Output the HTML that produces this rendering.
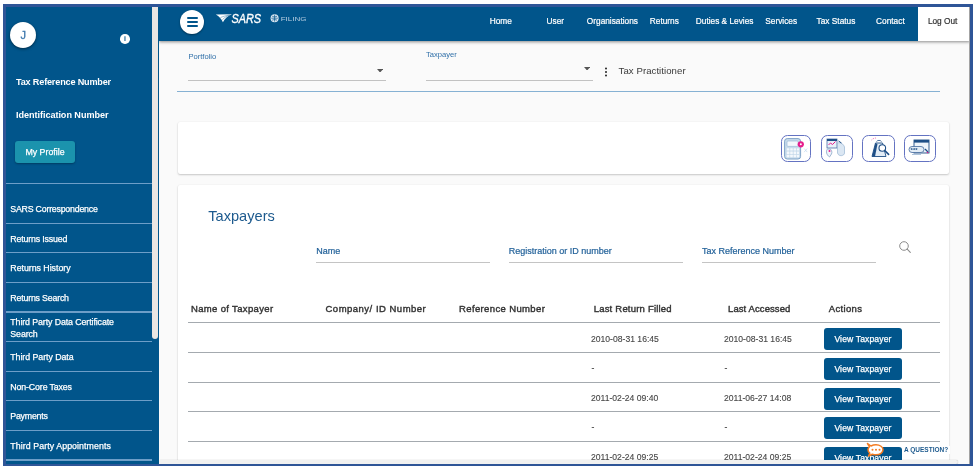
<!DOCTYPE html>
<html lang="en">
<head>
<meta charset="utf-8">
<title>SARS eFiling - Taxpayers</title>
<style>
*{box-sizing:border-box;margin:0;padding:0}
html,body{width:976px;height:467px;overflow:hidden;background:#fff}
body{position:relative;font-family:"Liberation Sans",Arial,sans-serif;color:#333}
.abs{position:absolute}
#frame{left:3px;top:4px;width:970px;height:462px;border:3px solid #2f5597;border-bottom-width:2.5px;z-index:50;pointer-events:none}
#app{left:6px;top:7px;width:964px;height:457px;background:#fafafa;overflow:hidden;filter:blur(.32px)}
#back{left:5px;top:6px;width:966px;height:459px;background:#fafafa}
#back i{position:absolute;background:#01558b}
/* coordinates inside #app are page coords minus (6,7) */
#side{left:0;top:0;width:153px;height:457px;background:#01558b}
#thumb{left:145.600px;top:0;width:6px;height:332px;background:#e9e6e3;border-radius:0 0 3px 3px}
#side .ln{position:absolute;left:0;width:146px;height:1.2px;background:#6d9ec8}
#side .mi{position:absolute;left:4.3px;color:#fff;font-size:8.8px;line-height:10px;white-space:nowrap;letter-spacing:-0.15px;-webkit-text-stroke:.25px #fff}
#avatar{left:4.3px;top:14.6px;width:26px;height:26px;border-radius:50%;background:#fff;box-shadow:0 1px 3px rgba(0,0,0,.5);color:#3f78ad;font-size:11px;line-height:26px;text-align:center;-webkit-text-stroke:.3px #3f78ad}
#info{left:114.2px;top:27px;width:9.6px;height:9.6px;border-radius:50%;background:#fff;color:#01558b;font-size:7px;line-height:9.6px;text-align:center;font-weight:bold}
.sb{color:#fff;font-weight:bold;font-size:9.1px;line-height:11px;white-space:nowrap;left:10px}
#myprof{left:9px;top:134px;width:60px;height:22px;border-radius:3px;background:#1b93ad;color:#fff;font-size:8.8px;line-height:22px;text-align:center;-webkit-text-stroke:.25px #fff;box-shadow:0 1px 2px rgba(0,0,0,.3)}
#hdr{left:153px;top:0;width:811px;height:33.5px;background:#01558b;box-shadow:0 1px 3px rgba(0,0,0,.45)}
#hdr .nv{position:absolute;top:9px;color:#fff;font-size:8.3px;line-height:10px;white-space:nowrap;-webkit-text-stroke:.2px currentColor}
#logout{left:758.5px;top:0;width:53px;height:33.5px;background:#fff}
#burger{left:21px;top:3px;width:24px;height:24px;border-radius:50%;background:#fff;box-shadow:0 1px 2px rgba(0,0,0,.4)}
#burger i{position:absolute;left:6.5px;width:11px;height:1.8px;background:#01558b;border-radius:1px}
.lbl{color:#2f6fa8;font-size:7.6px;line-height:9px;white-space:nowrap}
.ul{height:1px;background:#c2c2c2}
.card{background:#fff;border-radius:2px;box-shadow:0 1px 2px rgba(0,0,0,.2),0 0 2px rgba(0,0,0,.06)}
.ib{position:absolute;top:13.300px;height:26.300px;border:1.800px solid #6473c2;border-radius:6.5px;background:#fff;overflow:hidden}
.flt{color:#23629a;font-size:9px;line-height:10px;white-space:nowrap;-webkit-text-stroke:.2px #23629a;margin-top:-.4px}
.th{color:#333;font-size:9.500px;line-height:11px;white-space:nowrap;-webkit-text-stroke:.4px #333}
.rl{left:181.5px;width:752px;height:1.200px;background:#a4aaaf;margin-top:-.3px}
.td{color:#474747;font-size:8.6px;line-height:10px;white-space:nowrap;margin-top:.5px;-webkit-text-stroke:.12px #474747}
.btn{left:818px;width:78px;height:22px;border-radius:3px;background:#01558b;color:#fff;font-size:8.6px;line-height:22px;text-align:center;white-space:nowrap;letter-spacing:.12px;-webkit-text-stroke:.25px #fff}
</style>
</head>
<body>
<div id="back" class="abs"><i style="left:0;top:0;width:154px;height:459px"></i><i style="left:0;top:0;width:912px;height:34px"></i><i style="left:912px;top:0;width:54px;height:34px;background:#fff"></i></div>
<div id="app" class="abs">

  <!-- main header -->
  <div id="hdr" class="abs">
    <div id="burger" class="abs"><i style="top:7.2px"></i><i style="top:11px"></i><i style="top:14.8px"></i></div>
    <svg class="abs" style="left:56px;top:4px" width="100" height="18" viewBox="0 0 100 18">
      <path d="M.8 3.600 L16.900 3.300 C12.600 5.200 9.800 7.600 7.900 11.200 C6.700 8.200 4.200 5.600 .8 3.600 Z" fill="#fff"/>
      <path d="M7.300 8.800 C9.400 6.400 12.200 4.800 15.600 3.900 M5.400 6.600 C8 5.400 11 4.600 14.600 3.900" stroke="#01558b" stroke-width=".55" fill="none" opacity=".7"/>
      <text x="16.400" y="12.300" font-family="Liberation Sans, Arial, sans-serif" font-size="12.600" font-style="italic" fill="#fff" stroke="#fff" stroke-width=".35" textLength="29.600" lengthAdjust="spacingAndGlyphs">SARS</text>
      <circle cx="59.600" cy="7.200" r="4" fill="#dce7f1"/>
      <path d="M56.300 7.200h6.600M59.600 3.800v6.800M57.200 5.200c1.600 .8 3.200 .8 4.800 0M57.200 9.200c1.600-.8 3.200-.8 4.800 0" stroke="#01558b" stroke-width=".7" fill="none"/>
      <text x="65.700" y="9.900" font-family="Liberation Sans, Arial, sans-serif" font-size="5.900" fill="#b9cfe2" textLength="25.800" lengthAdjust="spacingAndGlyphs">FILING</text>
    </svg>
    <span class="nv" style="left:330.7px">Home</span>
    <span class="nv" style="left:387.6px">User</span>
    <span class="nv" style="left:427.8px">Organisations</span>
    <span class="nv" style="left:490.8px">Returns</span>
    <span class="nv" style="left:536.8px">Duties &amp; Levies</span>
    <span class="nv" style="left:606.3px">Services</span>
    <span class="nv" style="left:657.6px">Tax Status</span>
    <span class="nv" style="left:717.1px">Contact</span>
    <div id="logout" class="abs"></div>
    <span class="nv" style="left:768.9px;color:#333">Log Out</span>
  </div>

  <!-- sidebar -->
  <div id="side" class="abs">
    <div id="thumb" class="abs"></div>
    <div id="avatar" class="abs">J</div>
    <div id="info" class="abs">i</div>
    <div class="abs sb" style="top:69.700px;letter-spacing:-.17px">Tax Reference Number</div>
    <div class="abs sb" style="top:102.900px;letter-spacing:-.05px">Identification Number</div>
    <div id="myprof" class="abs">My Profile</div>
    <div class="ln" style="top:175.7px"></div>
    <div class="mi" style="top:196.7px;letter-spacing:-0.218px">SARS Correspondence</div>
    <div class="ln" style="top:215.5px"></div>
    <div class="mi" style="top:226.7px;letter-spacing:-0.157px">Returns Issued</div>
    <div class="ln" style="top:245.2px"></div>
    <div class="mi" style="top:256.2px;letter-spacing:-0.023px">Returns History</div>
    <div class="ln" style="top:274.8px"></div>
    <div class="mi" style="top:285.7px;letter-spacing:-0.186px">Returns Search</div>
    <div class="ln" style="top:304.4px"></div>
    <div class="mi" style="top:310px;letter-spacing:-0.089px;line-height:11.8px">Third Party Data Certificate<br>Search</div>
    <div class="ln" style="top:334px"></div>
    <div class="mi" style="top:345.3px;letter-spacing:-0.050px">Third Party Data</div>
    <div class="ln" style="top:363.6px"></div>
    <div class="mi" style="top:375.0px;letter-spacing:-0.129px">Non-Core Taxes</div>
    <div class="ln" style="top:393.2px"></div>
    <div class="mi" style="top:404.3px;letter-spacing:-0.225px">Payments</div>
    <div class="ln" style="top:422.8px"></div>
    <div class="mi" style="top:433.8px;letter-spacing:0.079px">Third Party Appointments</div>
    <div class="ln" style="top:452.4px"></div>
  </div>

  <!-- selector row -->
  <div class="abs lbl" style="left:182.400px;top:45px">Portfolio</div>
  <div class="abs ul" style="left:182px;top:73px;width:198px"></div>
  <svg class="abs" style="left:371.200px;top:61.800px" width="6.200" height="3.600" viewBox="0 0 7 4"><path d="M0 0H7L3.500 4Z" fill="#555"/></svg>
  <div class="abs lbl" style="left:420px;top:43.3px">Taxpayer</div>
  <div class="abs ul" style="left:420px;top:73px;width:167px"></div>
  <svg class="abs" style="left:577.800px;top:59.800px" width="6.200" height="3.600" viewBox="0 0 7 4"><path d="M0 0H7L3.500 4Z" fill="#555"/></svg>
  <svg class="abs" style="left:597.5px;top:60px" width="4" height="10" viewBox="0 0 4 10"><circle cx="2" cy="1.6" r="1" fill="#222"/><circle cx="2" cy="5" r="1" fill="#222"/><circle cx="2" cy="8.4" r="1" fill="#222"/></svg>
  <div class="abs" style="left:612.600px;top:57.900px;font-size:9.600px;line-height:12px;color:#3a3a3a;white-space:nowrap;letter-spacing:.06px">Tax Practitioner</div>
  <div class="abs" style="left:171px;top:83.800px;width:763.300px;height:1.700px;background:#86b1d3"></div>

  <!-- icon card -->
  <div class="abs card" style="left:172px;top:115px;width:771px;height:52px">
    <div class="ib" style="left:603px;width:30px">
      <svg width="28" height="26" viewBox="0 0 28 26" style="margin:-.3px 0 0 -.3px"><rect x="2.600" y="2.600" width="16" height="20.400" rx="2.600" fill="#c9dcec" stroke="#7fa3c7" stroke-width="1"/><rect x="5" y="5" width="11.200" height="5.400" rx="1" fill="#f4f8fc" stroke="#8fb0d0" stroke-width=".6"/><g fill="#f4f8fc"><rect x="4.800" y="12.200" width="2.600" height="2.400" rx=".5"/><rect x="8.200" y="12.200" width="2.600" height="2.400" rx=".5"/><rect x="11.600" y="12.200" width="2.600" height="2.400" rx=".5"/><rect x="15" y="12.200" width="2" height="2.400" rx=".5"/><rect x="4.800" y="15.500" width="2.600" height="2.400" rx=".5"/><rect x="8.200" y="15.500" width="2.600" height="2.400" rx=".5"/><rect x="11.600" y="15.500" width="2.600" height="2.400" rx=".5"/><rect x="15" y="15.500" width="2" height="2.400" rx=".5"/><rect x="4.800" y="18.800" width="2.600" height="2.400" rx=".5"/><rect x="8.200" y="18.800" width="2.600" height="2.400" rx=".5"/><rect x="11.600" y="18.800" width="2.600" height="2.400" rx=".5"/><rect x="15" y="18.800" width="2" height="2.400" rx=".5"/></g><circle cx="18.800" cy="8.300" r="3.100" fill="#e61c8c"/><circle cx="18.800" cy="8.300" r="1" fill="#fff"/><path d="M22.200 12.500l3 3.600M25.200 12.500l-3 3.600" stroke="#c6dcf0" stroke-width=".8"/></svg>
    </div>
    <div class="ib" style="left:642.800px;width:32px">
      <svg width="30" height="26" viewBox="1.500 1 30 26"><rect x="6.5" y="4" width="10" height="9" fill="#e9f0f8" stroke="#4b6ea8" stroke-width=".8"/><rect x="6.5" y="4" width="10" height="2" fill="#1f4f86"/><path d="M8 10l2-2 2 1.5 3-3" stroke="#e61c8c" stroke-width="1" fill="none"/><path d="M17 8c3-1 6 1 7 4v6c0 3-6 4-7 0z" fill="#dbe7f3" stroke="#9ab6d3" stroke-width=".7"/><path d="M7 14c-2 2-1 6 2 8l2-3c1-2 0-5-2-5z" fill="#eef3f9" stroke="#7d9cc2" stroke-width=".7"/><circle cx="9" cy="16" r="1" fill="#e61c8c"/><path d="M18 6l3 2" stroke="#1f4f86" stroke-width="1"/></svg>
    </div>
    <div class="ib" style="left:684px;width:32.5px">
      <svg width="30" height="26" viewBox="-1.500 1 30 26"><path d="M11 8l-3.5 13.5h14L18 8z" fill="#e3edf6" stroke="#1f4f86" stroke-width=".9"/><path d="M7.5 21.5L11 8l2 1-2.5 12.5z" fill="#1f4f86"/><circle cx="17.800" cy="13" r="3.300" fill="#fff" stroke="#1f4f86" stroke-width="1.100"/><path d="M20.300 15.600l3.800 3.800" stroke="#1f4f86" stroke-width="1.6" stroke-linecap="round"/><path d="M12 6.5c1-1.5 4-1.5 5 0" stroke="#1f4f86" stroke-width=".8" fill="none"/><path d="M7 5c1.500-1.500 3-2 5-2" stroke="#e61c8c" stroke-width=".6" fill="none" stroke-dasharray="1 1"/></svg>
    </div>
    <div class="ib" style="left:725.500px;width:32.500px">
      <svg width="31" height="26" viewBox="0 1 31 26"><rect x="9" y="5" width="15" height="13" fill="#eef4fa" stroke="#1f4f86" stroke-width=".9"/><rect x="9" y="5" width="15" height="2.600" fill="#1f4f86"/><rect x="4" y="11.500" width="15" height="6" rx="3" fill="#e3edf6" stroke="#44699d" stroke-width=".8"/><text x="5.6" y="16.800" font-family="Liberation Sans, Arial, sans-serif" font-size="6" font-weight="bold" fill="#1f4f86">***</text><path d="M20 14l3 3" stroke="#1f4f86" stroke-width="1.200"/><circle cx="22.500" cy="17.500" r=".8" fill="#e61c8c"/><path d="M7 19.500h9" stroke="#9ab6d3" stroke-width=".8"/></svg>
    </div>
  </div>

  <!-- taxpayers card -->
  <div class="abs card" style="left:172px;top:178px;width:771px;height:300px"></div>
  <div class="abs" style="left:202.300px;top:199.600px;font-size:14.6px;line-height:18px;color:#1d5a8e;white-space:nowrap">Taxpayers</div>

  <div class="abs flt" style="left:310.200px;top:239.500px">Name</div>
  <div class="abs ul" style="left:310px;top:255px;width:174px;background:#c4c4c4"></div>
  <div class="abs flt" style="left:502.700px;top:239.500px">Registration or ID number</div>
  <div class="abs ul" style="left:502.500px;top:255px;width:174px;background:#c4c4c4"></div>
  <div class="abs flt" style="left:695.900px;top:239.500px">Tax Reference Number</div>
  <div class="abs ul" style="left:695.500px;top:255px;width:174px;background:#c4c4c4"></div>
  <svg class="abs" style="left:892px;top:233px" width="14" height="14" viewBox="0 0 14 14"><circle cx="6" cy="6" r="4.300" fill="none" stroke="#8c8c8c" stroke-width="1"/><path d="M9.200 9.200L12.300 12.300" stroke="#8c8c8c" stroke-width="1.100" stroke-linecap="round"/></svg>

  <div class="abs th" style="left:185.0px;top:295.900px;letter-spacing:0.344px">Name of Taxpayer</div>
  <div class="abs th" style="left:319.5px;top:295.900px;letter-spacing:0.494px">Company/ ID Number</div>
  <div class="abs th" style="left:453.0px;top:295.900px;letter-spacing:0.369px">Reference Number</div>
  <div class="abs th" style="left:587.7px;top:295.900px;letter-spacing:0.206px">Last Return Filled</div>
  <div class="abs th" style="left:722.0px;top:295.900px;letter-spacing:0.092px">Last Accessed</div>
  <div class="abs th" style="left:822.7px;top:295.900px;letter-spacing:0.357px">Actions</div>

  <div class="abs rl" style="top:315.600px"></div>
  <div class="abs td" style="left:585px;top:326px">2010-08-31 16:45</div>
  <div class="abs td" style="left:718px;top:326px">2010-08-31 16:45</div>
  <div class="abs btn" style="top:321.300px">View Taxpayer</div>

  <div class="abs rl" style="top:345.200px"></div>
  <div class="abs td" style="left:585.500px;top:355.500px">-</div>
  <div class="abs td" style="left:718.500px;top:355.500px">-</div>
  <div class="abs btn" style="top:350.900px">View Taxpayer</div>

  <div class="abs rl" style="top:374.800px"></div>
  <div class="abs td" style="left:585px;top:385px">2011-02-24 09:40</div>
  <div class="abs td" style="left:718px;top:385px">2011-06-27 14:08</div>
  <div class="abs btn" style="top:380.500px">View Taxpayer</div>

  <div class="abs rl" style="top:404.400px"></div>
  <div class="abs td" style="left:585.500px;top:414.500px">-</div>
  <div class="abs td" style="left:718.500px;top:414.500px">-</div>
  <div class="abs btn" style="top:410.100px">View Taxpayer</div>

  <div class="abs rl" style="top:434px"></div>
  <div class="abs td" style="left:585px;top:444px">2011-02-24 09:25</div>
  <div class="abs td" style="left:718px;top:444px">2011-02-24 09:25</div>
  <div class="abs btn" style="top:439.700px">View Taxpayer</div>

  <!-- chat widget -->
  <svg class="abs" style="left:859px;top:435px" width="20" height="16" viewBox="0 0 20 16"><path d="M2.500 1.500l3.500 2.500c1.500-.8 3.200-1.200 5-1.200 4 0 7 2.200 7 5s-3 5-7 5c-1.300 0-2.500-.2-3.600-.6L3.500 14l1.300-2.800C3.700 10.300 3 9.200 3 7.800c0-1.200.5-2.200 1.400-3.100z" fill="#fff" stroke="#f47b20" stroke-width="1.500" stroke-linejoin="round"/><circle cx="7.500" cy="7.800" r="1" fill="#f47b20"/><circle cx="11" cy="7.800" r="1" fill="#f47b20"/><circle cx="14.500" cy="7.800" r="1" fill="#f47b20"/></svg>
  <div class="abs" style="left:896px;top:438.500px;font-size:6.500px;line-height:8px;font-weight:bold;color:#1d5a8e;white-space:nowrap;background:#fff;padding:0 2px">A QUESTION?</div>

  <div class="abs" style="left:962.600px;top:0;width:1px;height:457px;background:#a3a3a3;z-index:5"></div>
  <!-- horizontal scrollbar -->
  <div class="abs" style="left:153px;top:452.500px;width:811px;height:5px;background:#fafafa"></div>
  <div class="abs" style="left:154px;top:452.500px;width:798px;height:4.500px;background:#f1f1f0;border-radius:0 3px 3px 0;box-shadow:0 0 1px rgba(0,0,0,.35)"></div>
</div>
<div id="frame" class="abs"></div>
</body>
</html>
